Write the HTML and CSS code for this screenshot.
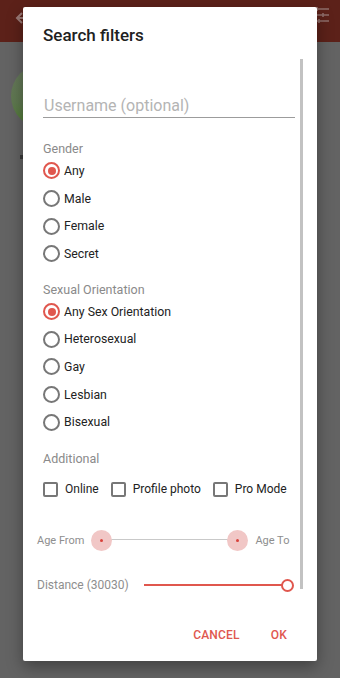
FILE: index.html
```html
<!DOCTYPE html>
<html>
<head>
<meta charset="utf-8">
<link rel="stylesheet" href="styles.css">
</head>
<body>
<div class="screen">
  <header class="appbar">
    <svg class="back" width="16" height="16" viewBox="0 0 16 16"><path d="M14 8H3M8 3L3 8l5 5" stroke="#9a7a76" stroke-width="2" fill="none"/></svg>
    <svg class="tune" width="18" height="18" viewBox="0 0 18 18"><path d="M1 3h16M1 9h16M1 15h16" stroke="#8f6d69" stroke-width="1.6"/><path d="M5 1v4M11 7v4M7 13v4" stroke="#8f6d69" stroke-width="1.6"/></svg>
  </header>
  <div class="behind">
    <div class="avatar"></div>
    <div class="mark"></div>
  </div>

  <div class="dialog">
    <h1 class="title">Search filters</h1>
    <div class="body">
      <div class="scrollbar"></div>
      <div class="field">Username (optional)</div>

      <div class="label first">Gender</div>
      <div class="radio on"><span class="dot"></span>Any</div>
      <div class="radio"><span class="dot"></span>Male</div>
      <div class="radio"><span class="dot"></span>Female</div>
      <div class="radio"><span class="dot"></span>Secret</div>

      <div class="label orient">Sexual Orientation</div>
      <div class="radio on"><span class="dot"></span>Any Sex Orientation</div>
      <div class="radio"><span class="dot"></span>Heterosexual</div>
      <div class="radio"><span class="dot"></span>Gay</div>
      <div class="radio"><span class="dot"></span>Lesbian</div>
      <div class="radio"><span class="dot"></span>Bisexual</div>

      <div class="label extra">Additional</div>
      <div class="checks">
        <div class="check"><span class="box"></span>Online</div>
        <div class="check"><span class="box"></span>Profile photo</div>
        <div class="check"><span class="box"></span>Pro Mode</div>
      </div>

      <div class="slider-row age">
        <span class="slabel">Age From</span>
        <div class="range">
          <div class="track"></div>
          <span class="thumb left"><span class="pip"></span></span>
          <span class="thumb right"><span class="pip"></span></span>
        </div>
        <span class="slabel">Age To</span>
      </div>

      <div class="slider-row dist">
        <span class="slabel">Distance (30030)</span>
        <div class="range">
          <div class="track red"></div>
          <span class="ring"></span>
        </div>
      </div>
    </div>
    <div class="actions">
      <span class="btn">CANCEL</span>
      <span class="btn">OK</span>
    </div>
  </div>
</div>
</body>
</html>
```

FILE: styles.css
```css
* { box-sizing: border-box; margin: 0; padding: 0; }
html, body { width: 340px; height: 678px; overflow: hidden; }
body { background: #636363; font-family: Roboto, "Noto Sans", sans-serif; }
.screen { position: relative; width: 340px; height: 678px; }
.appbar { height: 42px; background: #5c2119; position: relative; }
.back { position: absolute; left: 14px; top: 10px; }
.tune { position: absolute; left: 312px; top: 6px; }
.behind { position: relative; height: 636px; }
.avatar { position: absolute; left: 11px; top: 22px; width: 64px; height: 64px; border-radius: 50%; background: linear-gradient(#66775c, #5f7850 60%, #4f8030); }
.mark { position: absolute; left: 20px; top: 113px; width: 3px; height: 4px; background: #3a3a3a; }

.dialog {
  position: absolute; left: 23px; top: 7px; width: 294px; height: 654px;
  background: #fff; border-radius: 2px;
  box-shadow: 0 6px 16px rgba(0,0,0,0.35);
  display: flex; flex-direction: column;
}
.title { font-size: 17px; line-height: 22px; font-weight: 500; color: #212121; padding: 17px 20px 0; }
.body { position: relative; flex: 1; padding: 0 22px 0 20px; }
.scrollbar { position: absolute; left: 277px; top: 13px; width: 3px; height: 530px; background: #c2c2c2; }
.field {
  margin-top: 47px; height: 25px; padding-top: 3px; line-height: 20px; font-size: 16px; color: #b4b4b4;
  border-bottom: 1px solid #9c9c9c; padding-left: 1px; white-space: nowrap;
}
.label { font-size: 12.5px; line-height: 16px; color: #8a8a8a; }
.label.first { margin-top: 23px; }
.label.orient { margin-top: 14px; }
.label.extra { margin-top: 15px; }
.radio { height: 27.7px; display: flex; align-items: center; font-size: 12.3px; color: #222; white-space: nowrap; }
.dot { width: 17px; height: 17px; border-radius: 50%; border: 2px solid #777; margin-right: 4px; position: relative; flex: none; }
.radio.on .dot { border-color: #e0574e; }
.radio.on .dot::after { content: ""; position: absolute; left: 2.5px; top: 2.5px; width: 8px; height: 8px; border-radius: 50%; background: #e0574e; }
.checks { display: flex; margin-top: 10px; height: 24px; align-items: center; font-size: 12px; color: #222; white-space: nowrap; }
.check { display: flex; align-items: center; margin-right: 12px; flex: none; }
.check:last-child { margin-right: 0; }
.box { width: 15px; height: 15px; border: 2px solid #777; border-radius: 2px; margin-right: 7px; flex: none; }
.slider-row { display: flex; align-items: center; height: 24px; margin-left: -6px; color: #8e8e8e; white-space: nowrap; }
.age { margin-top: 27px; font-size: 11px; }
.dist { margin-top: 21px; font-size: 12px; }
.range { position: relative; height: 24px; flex: none; }
.age .range { width: 157px; margin: 0 7px; }
.age .track { position: absolute; left: 11px; right: 11px; top: 11px; height: 1px; background: #c9c9c9; }
.thumb { position: absolute; top: 2px; width: 21px; height: 21px; border-radius: 50%; background: #f1c7c6; }
.thumb.left { left: 0; }
.thumb.right { right: 0; }
.pip { position: absolute; left: 9px; top: 9px; width: 3px; height: 3px; border-radius: 50%; background: #d8413b; }
.dist .range { width: 150px; margin-left: 15px; }
.dist .track.red { position: absolute; left: 0; right: 8px; top: 11px; height: 2px; background: #e0574e; }
.ring { position: absolute; right: 0; top: 6px; width: 13px; height: 13px; border-radius: 50%; border: 2px solid #e0574e; background: #fff; }
.actions { display: flex; justify-content: flex-end; gap: 31px; height: 36px; align-items: center; padding-right: 30px; margin-bottom: 8px; }
.btn { font-size: 12px; font-weight: 500; color: #e0574e; letter-spacing: 0.2px; }
```
